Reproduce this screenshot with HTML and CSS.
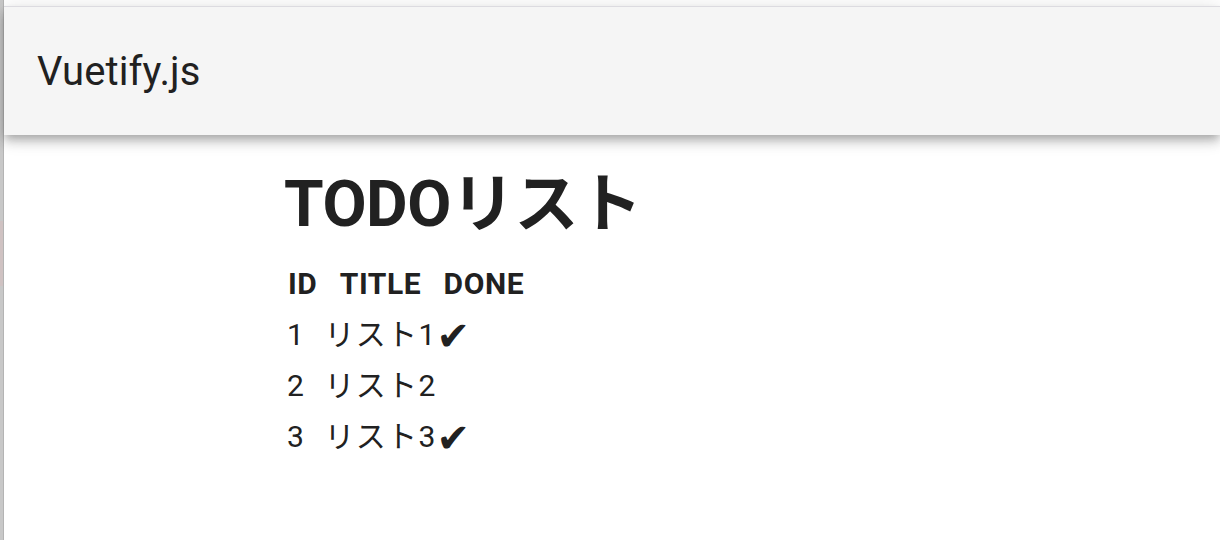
FILE: index.html
```html
<!DOCTYPE html>
<html lang="ja">
<head>
<meta charset="utf-8">
<title>Vuetify.js</title>
<link rel="stylesheet" href="styles.css">
</head>
<body>
<div class="frame">
  <div class="edge"></div>
  <div class="app">
    <header class="toolbar">
      <div class="toolbar-title">Vuetify.js</div>
    </header>
    <main class="content">
      <h1 class="title">TODOリスト</h1>
      <table class="todo">
        <thead>
          <tr><th>ID</th><th>TITLE</th><th>DONE</th></tr>
        </thead>
        <tbody>
          <tr><td>1</td><td>リスト1</td><td><span class="check">✔</span></td></tr>
          <tr><td>2</td><td>リスト2</td><td></td></tr>
          <tr><td>3</td><td>リスト3</td><td><span class="check">✔</span></td></tr>
        </tbody>
      </table>
    </main>
  </div>
</div>
</body>
</html>
```
FILE: styles.css
```css
html, body {
  margin: 0;
  padding: 0;
  background: #ffffff;
}
body {
  width: 1220px;
  height: 540px;
  overflow: hidden;
  font-family: Roboto, "Noto Sans CJK JP", sans-serif;
  color: #212121;
}
.frame {
  display: flex;
  height: 540px;
}
.edge {
  width: 4px;
  flex: none;
  background: linear-gradient(to bottom, #c8c8c8 0, #c8c8c8 221px, #cfc2c2 221px, #cfc2c2 286px, #c8c8c8 286px);
  border-right: 1px solid #b4b4b4;
  box-sizing: border-box;
}
.app {
  flex: 1;
  display: flex;
  flex-direction: column;
  padding-top: 6px;
}
.toolbar {
  height: 128px;
  background: #f5f5f5;
  border-top: 1px solid #dcdbe0;
  display: flex;
  align-items: center;
  padding-left: 33px;
  box-shadow: 0 4px 8px -2px rgba(0,0,0,.2), 0 8px 10px 0 rgba(0,0,0,.14), 0 2px 20px 0 rgba(0,0,0,.12);
  position: relative;
  z-index: 1;
}
.toolbar-title {
  font-size: 40px;
  font-weight: 400;
  letter-spacing: 0.1px;
}
.content {
  padding-left: 280px;
  padding-top: 28px;
}
.title {
  margin: 0;
  font-size: 64px;
  line-height: 84px;
  font-weight: 700;
  letter-spacing: -0.4px;
}
.todo {
  border-spacing: 4px;
  margin-left: -2px;
  margin-top: 10px;
  font-size: 30px;
}
.todo th {
  font-weight: 700;
  padding: 2px;
  line-height: 42px;
  letter-spacing: 0.6px;
}
.todo td {
  padding: 2px 1px;
  line-height: 43px;
  letter-spacing: 1.3px;
}
.check {
  display: inline-block;
  font-family: "DejaVu Sans", sans-serif;
  font-size: 40px;
  line-height: 30px;
  margin-left: -6px;
  vertical-align: -5px;
}
```
